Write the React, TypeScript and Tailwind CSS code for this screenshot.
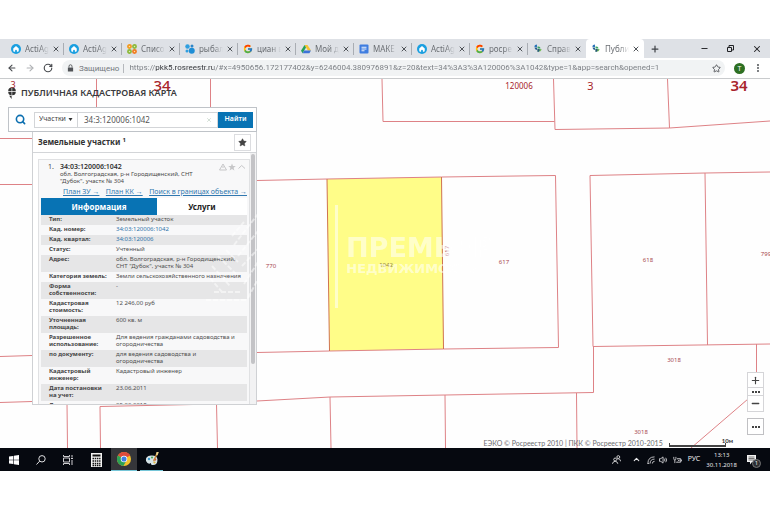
import React from "react";
import { ArrowLeft, ArrowRight, RotateCw, Star, Plus, X, Minus, Search, ChevronUp, MoreVertical } from "lucide-react";
import { FcGoogle } from "react-icons/fc";

type Favicon = "acti" | "orange" | "blue" | "google" | "drive" | "docs" | "map";

const tabs: { icon: Favicon; title: string; active?: boolean }[] = [
  { icon: "acti", title: "ActiAg" },
  { icon: "acti", title: "ActiAg" },
  { icon: "orange", title: "Списо" },
  { icon: "blue", title: "рыбал" },
  { icon: "google", title: "циан в" },
  { icon: "drive", title: "Мой д" },
  { icon: "docs", title: "МАКЕ" },
  { icon: "acti", title: "ActiAg" },
  { icon: "google", title: "росре" },
  { icon: "map", title: "Справ" },
  { icon: "map", title: "Публи", active: true },
];

const rows: { label: string; value: string; link?: boolean }[] = [
  { label: "Тип:", value: "Земельный участок" },
  { label: "Кад. номер:", value: "34:03:120006:1042", link: true },
  { label: "Кад. квартал:", value: "34:03:120006", link: true },
  { label: "Статус:", value: "Учтенный" },
  { label: "Адрес:", value: "обл. Волгоградская, р-н Городищенский, СНТ \"Дубок\", участк № 304" },
  { label: "Категория земель:", value: "Земли сельскохозяйственного назначения" },
  { label: "Форма собственности:", value: "-" },
  { label: "Кадастровая стоимость:", value: "12 246,00 руб" },
  { label: "Уточненная площадь:", value: "600 кв. м" },
  { label: "Разрешенное использование:", value: "Для ведения гражданами садоводства и огородничества" },
  { label: "по документу:", value: "для ведения садоводства и огородничества" },
  { label: "Кадастровый инженер:", value: "Кадастровый инженер" },
  { label: "Дата постановки на\u00a0учет:", value: "23.06.2011" },
  { label: "Дата изменения:", value: "05.02.2018" },
];

function TabIcon({ icon }: { icon: Favicon }) {
  if (icon === "google") return <FcGoogle className="size-[10px] shrink-0" />;
  return (
    <svg viewBox="0 0 20 20" className="size-[10px] shrink-0" aria-hidden="true">
      {icon === "acti" && (
        <>
          <circle cx="10" cy="10" r="10" fill="#1a9fe0" />
          <path d="M10 4 4.500 9v4.500a2 2 0 0 0 2 2h1.700v-2.200a1.800 1.800 0 0 1 3.600 0v2.200h1.700a2 2 0 0 0 2-2V9Z" fill="#fff" />
        </>
      )}
      {icon === "orange" && (
        <>
          <circle cx="5" cy="5" r="3.200" fill="#fbe0a8" stroke="#f29a1f" strokeWidth="3.400" />
          <circle cx="15" cy="5" r="3.200" fill="#dcebc0" stroke="#8cb93a" strokeWidth="3.400" />
          <circle cx="5" cy="15" r="3.200" fill="#dcebc0" stroke="#8cb93a" strokeWidth="3.400" />
          <circle cx="15" cy="15" r="3.200" fill="#fbe0a8" stroke="#f27a1f" strokeWidth="3.400" />
        </>
      )}
      {icon === "blue" && (
        <>
          <circle cx="5" cy="5" r="4.500" fill="#2f9fe0" />
          <circle cx="14" cy="4" r="3" fill="#2f86c8" />
          <circle cx="4" cy="14" r="3" fill="#2f9fe0" />
          <circle cx="13.500" cy="13.500" r="6" fill="#1f8ed6" />
        </>
      )}
      {icon === "drive" && (
        <>
          <path d="M7 2h6l7 11h-6.200Z" fill="#f6c22d" />
          <path d="M7 2 0 13.500 3.200 18.500 10 7Z" fill="#24a05a" />
          <path d="M6.500 13H20l-3.200 5.500H3.200Z" fill="#3c74d8" />
        </>
      )}
      {icon === "docs" && (
        <>
          <rect x="1" y="1" width="18" height="18" rx="2" fill="#3f7de0" />
          <path d="M5 6.500h10M5 10h10M5 13.500h6" stroke="#fff" strokeWidth="1.800" />
        </>
      )}
      {icon === "map" && (
        <>
          <path d="M3 4Q3 1 8 1v5H3Z" fill="#2b75b8" />
          <path d="M3 7h5v5Q3 11 3 7Z" fill="#2a5f8f" />
          <path d="M9 5q6-1 6 4H9Z" fill="#3aa56a" />
          <path d="M9 10h8q0 6-8 5Z" fill="#75bd5b" />
          <path d="M9 10h4v3q-1 3-4 3Z" fill="#28577f" />
        </>
      )}
    </svg>
  );
}

function TabStrip() {
  return (
    <header className="flex h-[19px] shrink-0 items-stretch bg-[#dee1e6] pl-[6px] text-[8px] text-[#6b6f74]">
      <nav aria-label="Вкладки" className="flex min-w-0">
        {tabs.map((tab, i) => (
          <div
            key={i}
            className={
              tab.active
                ? "flex w-[58px] items-center rounded-t-[4px] bg-white pl-[5px]"
                : "flex w-[58px] items-center pl-[5px]"
            }
          >
            <TabIcon icon={tab.icon} />
            <a
              href="#tab"
              className="ml-[4px] w-[24px] whitespace-nowrap [mask-image:linear-gradient(to_right,black_60%,transparent)]"
            >
              {tab.title}
            </a>
            <button aria-label="Закрыть вкладку" className="ml-[3px] text-[#505459]">
              <X className="size-[8px]" strokeWidth={3} />
            </button>
            {!tab.active && i !== 9 && <span className="ml-auto h-[12px] w-px bg-[#a9adb3]" />}
          </div>
        ))}
      </nav>
      <button aria-label="Новая вкладка" className="ml-[6px] text-[#404449]">
        <Plus className="size-[10px]" strokeWidth={3} />
      </button>
      <div className="ml-auto flex items-center gap-[17px] pr-[8px] text-[#202124]">
        <button aria-label="Свернуть"><Minus className="size-[9px]" strokeWidth={2.5} /></button>
        <button aria-label="Свернуть в окно">
          <svg viewBox="0 0 9 9" className="size-[9px]" fill="none" stroke="currentColor" aria-hidden="true">
            <path d="M1.500 3.500h4v4h-4ZM3 3V1.500h4.500V6H6" />
          </svg>
        </button>
        <button aria-label="Закрыть"><X className="size-[10px]" strokeWidth={2.5} /></button>
      </div>
    </header>
  );
}

function Toolbar() {
  return (
    <div className="flex h-[21px] shrink-0 items-center border-b border-[#c9cbcd] bg-white pr-[7px] pl-[7px] text-[8px]">
      <div className="flex gap-[8px] text-[#4a4d51]">
        <button aria-label="Назад"><ArrowLeft className="size-[10px]" strokeWidth={2.6} /></button>
        <button aria-label="Вперёд" className="text-[#b0b2b5]"><ArrowRight className="size-[10px]" strokeWidth={2.6} /></button>
        <button aria-label="Обновить"><RotateCw className="size-[10px]" strokeWidth={2.8} /></button>
      </div>
      <div className="ml-[9px] flex h-[16px] flex-1 items-center rounded-full bg-[#f1f3f4] pr-[4px] pl-[5px] font-['Roboto','Noto_Sans',sans-serif] text-[#74787d]">
        <svg viewBox="0 0 8 9" className="h-[8px] w-[7px]" aria-hidden="true">
          <path d="M1 4h6v4.500H1Z" fill="#505357" />
          <path d="M2.300 4V2.500a1.700 1.700 0 0 1 3.400 0V4" fill="none" stroke="#505357" />
        </svg>
        <span className="ml-[5px] border-r border-[#b5b8bc] pr-[4px] leading-[9px]">Защищено</span>
        <input
          aria-label="Адресная строка"
          className="ml-[5px] min-w-0 flex-1 bg-[linear-gradient(to_right,#777b80_26px,#303236_26px,#303236_84px,#777b80_84px)] bg-clip-text text-transparent outline-none"
          defaultValue="https://pkk5.rosreestr.ru/#x=4950656.172177402&y=6246004.380976891&z=20&text=34%3A3%3A120006%3A1042&type=1&app=search&opened=1"
        />
        <button aria-label="Добавить в закладки" className="text-[#55585c]"><Star className="size-[9px]" strokeWidth={2.5} /></button>
      </div>
      <button aria-label="Профиль" className="ml-[9px] size-[11px] rounded-full bg-[#2e7023] text-[7px] leading-[11px] text-white">Т</button>
      <button aria-label="Меню" className="ml-[8px] text-[#55585c]"><MoreVertical className="size-[10px]" strokeWidth={3} /></button>
    </div>
  );
}

function ParcelMap() {
  return (
    <svg
      viewBox="0 79 770 369"
      preserveAspectRatio="xMinYMin slice"
      className="absolute inset-0 size-full"
      role="img"
      aria-label="Кадастровая карта"
    >
      <path d="M327 179 441.500 177 443.500 349 329.500 351Z" fill="#fffd88" />
      <g fill="none" stroke="#de8286" strokeWidth="1">
        <path d="M96.500 79V107M210.500 79V107M0 138.500H32M0 184.500H32M0 356.500 32 355.500M0 402.500 32 401.500" />
        <path d="M67 403 67.500 448M100.500 448 100 406.500 216 404 257 401 330 397 445 395 593.500 392.500V346.500" />
        <path d="M216.500 404 217.500 448M330 397 331 448M445 395 445.500 448M576.500 393 577 448" />
        <path d="M382 79 383 121.500H554.500M553.500 79 555 129.500 669.500 128 770 121M667.500 79 669.500 128" />
        <path d="M257 180.500 327 179 441.500 177 555.500 175.500 558.500 347.500 443.500 349 329.500 351 257 352.500" />
        <path d="M327 179 329.500 351M441.500 177 443.500 349" stroke="#cf7350" />
        <path d="M593 346.500 590 175.500 705 173 770 172M705 173 707.500 345M593 346.500 770 344M756.500 344V374L757 388M748 399 691 448" />
      </g>
      <g fill="#a8474e" fontSize="6" textAnchor="middle">
        <text x="271" y="268">770</text>
        <text x="386" y="267" fill="#8f7b3c">1042</text>
        <text x="504" y="264">617</text>
        <text transform="translate(449 251) rotate(-90)">617</text>
        <text x="648" y="262">618</text>
        <text x="766" y="256">799</text>
        <text x="674" y="362">3018</text>
        <text x="641" y="434">3018</text>
      </g>
      <g fill="#a8242a" textAnchor="middle">
        <text x="519" y="89" fontSize="8">120006</text>
        <text x="590.500" y="90" fontSize="11">3</text>
        <text x="13" y="88" fontSize="9">3</text>
        <text x="739" y="91" fontSize="15" fontWeight="600">34</text>
        <text x="162" y="91" fontSize="15" fontWeight="500">34</text>
      </g>
    </svg>
  );
}

/* Agency watermark printed over the map and the card. */
function Watermark() {
  return (
    <svg
      viewBox="0 79 770 369"
      preserveAspectRatio="xMinYMin slice"
      className="pointer-events-none absolute inset-0 size-full"
      aria-hidden="true"
    >
      <g opacity="0.55" fill="#fff" fontFamily="'DejaVu Sans', sans-serif" fontWeight="700">
        <rect x="335" y="205" width="3" height="103" />
        <text x="346" y="257" fontSize="27">ПРЕМЬЕР</text>
        <text x="346" y="273" fontSize="13">НЕДВИЖИМОСТЬ</text>
      </g>
      <g opacity="0.5" fill="none" stroke="#fff" strokeWidth="2">
        <path d="M234 245 258 214M238 256 258 231M232 236 244 222M242 266 258 249M244 284 258 262M248 298 258 279M206 300 246 300M214 292 242 292M226 250 238 262M218 256 236 274M212 266 230 286M210 278 222 292" strokeDasharray="5 2" />
      </g>
    </svg>
  );
}

function SearchBar() {
  return (
    <form
      className="flex h-[25px] items-center border border-[#bfc3c8] bg-white pr-[3px] pl-[6px]"
      onSubmit={(e) => e.preventDefault()}
    >
      <button type="button" aria-label="Поиск" className="w-[19px] text-[#0c6fb0]">
        <Search className="size-[11px]" strokeWidth={3.5} />
      </button>
      <div className="flex h-[16px] flex-1 border border-[#d3d5d8]">
        <label className="flex items-center border-r border-[#d3d5d8] px-[4px] text-[7px] text-[#444]">
          <select aria-label="Тип объекта" className="w-[29px] appearance-none bg-transparent outline-none">
            <option>Участки</option>
          </select>
          <svg viewBox="0 0 4 3" className="h-[3px] w-[5px]" aria-hidden="true"><path d="M0 0h4L2 3Z" fill="#333" /></svg>
        </label>
        <input
          aria-label="Кадастровый номер"
          defaultValue="34:3:120006:1042"
          className="w-0 min-w-0 flex-1 px-[6px] text-[8px] text-[#555] outline-none"
        />
        <button type="button" aria-label="Очистить" className="pr-[5px] text-[#b9cbbd]">
          <X className="size-[6px]" strokeWidth={2.5} />
        </button>
      </div>
      <button className="h-[16px] w-[35px] bg-[#0873b4] text-[7px] font-semibold text-white">Найти</button>
    </form>
  );
}

function ParcelCard() {
  return (
    <article className="border border-[#e0e1e3] bg-[#f8f8f9] px-[2px] pt-[3px]">
      <div className="flex pr-px pl-[7px] text-[#4a4a4a]">
        <span className="w-[12px] text-[7px] leading-[8px]">1.</span>
        <div className="min-w-0 flex-1">
          <h3 className="text-[7px] leading-[8px] font-semibold text-[#333]">34:03:120006:1042</h3>
          <p className="w-[136px] text-[6px] leading-[7px]">обл. Волгоградская, р-н Городищенский, СНТ "Дубок", участк № 304</p>
        </div>
        <svg viewBox="0 0 27 8" className="h-[8px] w-[27px] shrink-0" fill="none" stroke="#c6c6c8" aria-hidden="true">
          <path d="M4 1 7.500 7h-7ZM4 3v2" />
          <path d="m13 .5 1 2.500h2.800L14.600 4.700l.8 2.800L13 5.900l-2.400 1.600.8-2.800L9.200 3H12Z" fill="#c6c6c8" stroke="none" />
          <path d="m19.500 5.500 3.200-3 3.300 3" />
        </svg>
      </div>
      <div className="flex h-[12px] items-center justify-between pl-[22px] text-[7px] leading-[9px] text-[#3178b0]">
        <a href="#zu" className="underline">План ЗУ →</a>
        <a href="#kk" className="underline">План КК →</a>
        <a href="#search" className="underline">Поиск в границах объекта →</a>
      </div>
      <div className="mt-px flex h-[17px] text-[8px] font-bold">
        <button className="w-[116px] bg-[#0873b4] text-white">Информация</button>
        <button className="flex-1 bg-white text-[#222]">Услуги</button>
      </div>
      <table className="w-full table-fixed border-collapse text-left text-[6px] leading-[7px] text-[#505050]">
        <tbody>
          {rows.map((row) => (
            <tr key={row.label} className="odd:bg-[#e6e6e7]">
              <th scope="row" className="w-[75px] pt-px pr-[4px] pb-[2px] pl-[8px] align-top font-bold text-[#444]">{row.label}</th>
              <td className="pt-px pr-[4px] pb-[2px] align-top">
                {row.link ? <a href="#object" className="text-[#2f74ab]">{row.value}</a> : row.value}
              </td>
            </tr>
          ))}
        </tbody>
      </table>
    </article>
  );
}

function ResultsPanel() {
  return (
    <section className="ml-[24px] flex min-h-0 flex-1 flex-col border-x border-b border-[#cfd1d4] bg-white">
      <div className="flex h-[21px] shrink-0 items-center justify-between border-b border-[#d3d5d8] pr-[5px] pl-[5px]">
        <h2 className="text-[8px] font-bold text-[#333]">
          Земельные участки <sup className="text-[6px]">1</sup>
        </h2>
        <button aria-label="Избранное" className="flex size-[17px] items-center justify-center border border-[#dcdde0] text-[#444]">
          <Star className="size-[9px]" fill="currentColor" strokeWidth={1} />
        </button>
      </div>
      <div className="flex min-h-0 flex-1">
        <div className="min-w-0 flex-1 overflow-hidden pt-[6px] pl-[5px]">
          <ParcelCard />
        </div>
        <div className="w-[6px] bg-[#f2f2f3] px-px pt-px">
          <div className="h-[84%] rounded-full bg-[#c3c3c6]" />
        </div>
      </div>
    </section>
  );
}

function MapControls() {
  return (
    <div className="absolute right-[6px] bottom-[13px] flex w-[17px] flex-col gap-[6px] text-[#444]">
      <div className="flex flex-col divide-y divide-[#d5d5d8] border border-[#d5d5d8] bg-white">
        <button aria-label="Приблизить" className="flex h-[15px] items-center justify-center"><Plus className="size-[11px]" strokeWidth={2.5} /></button>
        <button aria-label="Масштаб" className="flex h-[8px] items-center justify-center"><Dots /></button>
        <button aria-label="Отдалить" className="flex h-[15px] items-center justify-center"><Minus className="size-[11px]" strokeWidth={2.8} /></button>
      </div>
      <button aria-label="Ещё" className="flex h-[17px] items-center justify-center border border-[#c0c0c3] bg-white"><Dots /></button>
    </div>
  );
}

function Dots() {
  return (
    <svg viewBox="0 0 8 2" className="h-[2px] w-[8px]" fill="#444" aria-hidden="true">
      <path d="M0 0h2v2H0ZM3 0h2v2H3ZM6 0h2v2H6Z" />
    </svg>
  );
}

function MapArea() {
  return (
    <main className="relative flex min-h-0 flex-1 flex-col overflow-hidden bg-[#fefefe]">
      <ParcelMap />
      <div className="relative mb-[43px] ml-[8px] flex min-h-0 w-[249px] flex-1 flex-col self-start">
        <div className="flex h-[28px] shrink-0 items-center gap-[5px] text-[#3a3a3c]">
          <svg viewBox="0 0 8 12" className="h-[12px] w-[8px]" fill="#333" aria-hidden="true">
            <path d="M3.600 .5v3.600H.2Q.2.5 3.600.5ZM4.200.5Q7.800.5 7.800 4.100H4.200ZM.2 4.700h3.400v3.600Q.2 8.300.2 4.700ZM4.200 4.700h3.600Q7.800 8.300 4.200 8.300ZM1.200 8.700h2.400V12Z" />
          </svg>
          <h1 className="text-[9px] font-semibold whitespace-nowrap">ПУБЛИЧНАЯ КАДАСТРОВАЯ КАРТА</h1>
        </div>
        <SearchBar />
        <ResultsPanel />
      </div>
      <MapControls />
      <div className="absolute right-[45px] bottom-0 flex items-end gap-[6px] font-['Lato','Noto_Sans',sans-serif] text-[7px] leading-[9px] text-[#6c6c70]">
        <p>ЕЭКО © Росреестр 2010 | ПКК © Росреестр 2010-2015</p>
        <div className="flex items-end text-[6px] font-bold text-[#333]">
          <span className="mb-px h-[4px] w-[57px] border-x border-b-2 border-[#444]" />
          <span className="-mr-[8px] -ml-[4px] mb-[4px] leading-[7px]">10м</span>
        </div>
      </div>
      <Watermark />
    </main>
  );
}

function Taskbar() {
  return (
    <footer className="flex h-[23px] shrink-0 items-stretch bg-[#060910] text-[7px] text-[#e8e8ea]">
      <button aria-label="Пуск" className="flex w-[27px] items-center justify-center">
        <svg viewBox="0 0 10 10" className="size-[10px]" fill="#fff" aria-hidden="true">
          <path d="M0 1.500 4.300.9v3.800H0ZM4.900.8 10 0v4.700H4.900ZM0 5.300h4.300v3.800L0 8.500ZM4.900 5.300H10V10l-5.100-.8Z" />
        </svg>
      </button>
      <button aria-label="Поиск в Windows" className="flex w-[27px] items-center justify-center">
        <svg viewBox="0 0 10 10" className="size-[10px]" fill="none" stroke="#e0e0e2" aria-hidden="true">
          <circle cx="6" cy="3.800" r="3.200" />
          <path d="M3.700 6.100.5 9.500" />
        </svg>
      </button>
      <button aria-label="Представление задач" className="flex w-[27px] items-center justify-center">
        <svg viewBox="0 0 10 10" className="size-[10px]" fill="none" stroke="#cfcfd2" aria-hidden="true">
          <path d="M.5 3h6v4h-6ZM.5 0v1.500h6V0M.5 10V8.500h6V10M9 0v2.500M9 5v5M8 3.500h2" />
        </svg>
      </button>
      <button aria-label="Калькулятор" className="flex w-[30px] items-center justify-center">
        <svg viewBox="0 0 11 14" className="h-[14px] w-[11px]" aria-hidden="true">
          <path d="M0 0h11v14H0Z" fill="#f2f2f2" />
          <path d="M1.500 1.500h8v2h-8Z" fill="#111" />
          <path d="M1.500 5.500h8M1.500 8h8M1.500 10.500h8M1.500 12.500h8" stroke="#111" strokeWidth="1.300" strokeDasharray="1.500 .7" />
        </svg>
      </button>
      <button aria-label="Google Chrome" className="flex w-[26px] items-center justify-center border-b border-[#76c6d8] bg-[#35363a]">
        <svg viewBox="0 0 24 24" className="size-[14px]" aria-hidden="true">
          <circle cx="12" cy="12" r="12" fill="#f4c22c" />
          <path d="M12 12 1.600 6A12 12 0 0 1 22.400 6Z" fill="#dd4b3c" />
          <path d="M12 12 1.600 6A12 12 0 0 0 11 24l5-9Z" fill="#2da155" />
          <path d="M12 6h10.400L20 3H5Z" fill="#dd4b3c" />
          <circle cx="12" cy="12" r="5.600" fill="#fff" />
          <circle cx="12" cy="12" r="4.400" fill="#3f7fe4" />
        </svg>
      </button>
      <button aria-label="Paint" className="ml-[3px] flex w-[23px] items-center justify-center border-b border-[#76c6d8]">
        <svg viewBox="0 0 14 14" className="size-[14px]" aria-hidden="true">
          <path d="M1 9Q0 4 6 3.500q6-.5 6.500 4Q12.500 13 8 13q-2.500 0-2-2-3 2-5-2Z" fill="#d7e3e6" />
          <circle cx="4" cy="7" r="1.200" fill="#3f9bd0" />
          <circle cx="7" cy="5.500" r="1.100" fill="#4faa5c" />
          <circle cx="10" cy="7.500" r="1.200" fill="#d65345" />
          <circle cx="9.500" cy="10.500" r="1.100" fill="#e2b53b" />
          <path d="m8 9 3-7 1.300.7L9 9.500Z" fill="#c98d3c" />
          <path d="m10.800 2.500.7-2.500h2.300L12.500 3.500Z" fill="#f0d28c" />
        </svg>
      </button>
      <div className="ml-auto flex items-center pr-[13px]">
        <svg viewBox="0 0 10 10" className="mr-[11px] size-[9px]" fill="none" stroke="#dcdcde" aria-hidden="true">
          <circle cx="3.500" cy="5" r="1.600" />
          <circle cx="7" cy="2.300" r="1.600" />
          <path d="M.5 9.800Q1 7 3.500 7t3 2.800M5.800 4.500Q9 3.500 9.500 7" />
        </svg>
        <ChevronUp className="mr-[6px] size-[9px]" strokeWidth={3} />
        <svg viewBox="0 0 9 9" className="mr-[4px] size-[8px]" fill="none" stroke="#cfcfd2" aria-hidden="true">
          <path d="M1 8.500Q1 1 8.500 1M3.500 8.500q0-5 5-5M6 8.500Q6 6 8.500 6M.5 8.500h2" />
        </svg>
        <svg viewBox="0 0 10 9" className="mr-[5px] h-[8px] w-[9px]" fill="none" stroke="#cfcfd2" aria-hidden="true">
          <path d="M.5 3h1.500L4.500 1v7L2 6H.5ZM6 3q1.200 1.500 0 3M7.500 2q2 2.500 0 5" />
        </svg>
        <svg viewBox="0 0 10 9" className="mr-[6px] h-[8px] w-[9px]" fill="none" stroke="#cfcfd2" aria-hidden="true">
          <path d="M.8 1v2q0 1.500 1.200 1.500T3.200 3V1M2 4.500V8M4.500 3h4v4H3.500M9.500 4v2M5.500 4l2 2m0-2-2 2" />
        </svg>
        <span className="mr-[6px]">РУС</span>
        <div className="mr-[10px] text-center text-[6px] leading-[10px]">
          <div>13:13</div>
          <div>30.11.2018</div>
        </div>
        <button aria-label="Уведомления" className="relative">
          <svg viewBox="0 0 10 10" className="size-[10px]" aria-hidden="true">
            <path d="M0 0h9v7H5L3 9.500V7H0Z" fill="#f2f2f2" />
            <path d="M1.500 2h6M1.500 3.500h6M1.500 5h6" stroke="#222" strokeWidth=".6" />
          </svg>
          <span className="absolute top-[4px] left-[5px] size-[9px] rounded-full border border-[#777] bg-[#2c2e33] text-[6px] leading-[7px]">1</span>
        </button>
      </div>
    </footer>
  );
}

export default function App() {
  return (
    <div className="flex h-screen flex-col bg-white py-[39px] font-['Noto_Sans','Open_Sans',sans-serif]">
      <TabStrip />
      <Toolbar />
      <MapArea />
      <Taskbar />
    </div>
  );
}
